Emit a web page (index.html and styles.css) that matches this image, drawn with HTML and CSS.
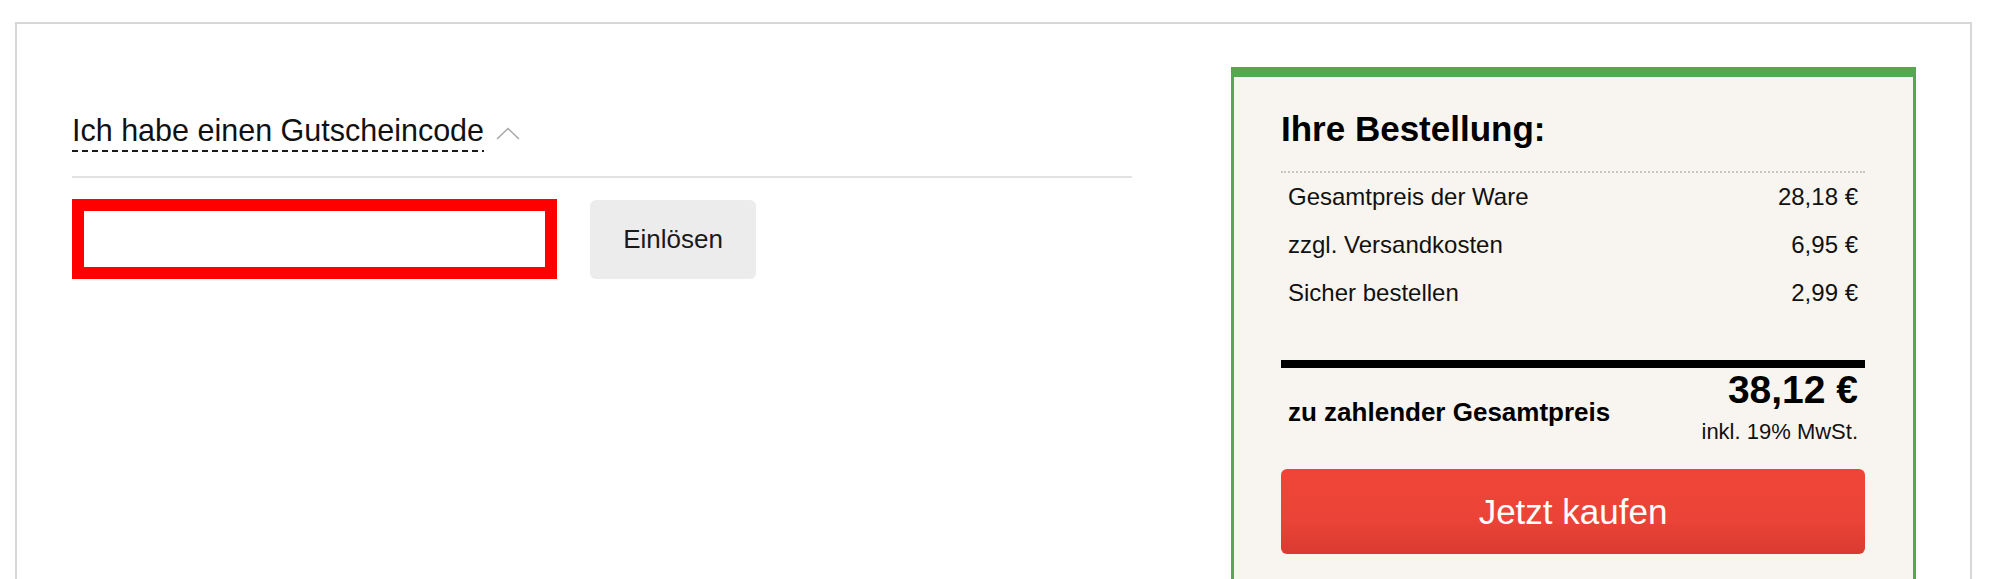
FILE: index.html
```html
<!DOCTYPE html>
<html lang="de">
<head>
<meta charset="utf-8">
<title>Warenkorb</title>
<link rel="stylesheet" href="styles.css">
</head>
<body>
<div class="page">
  <div class="checkout">
    <section class="coupon">
      <div class="coupon-toggle">
        <span class="coupon-label">Ich habe einen Gutscheincode</span>
        <svg class="chevron" width="24" height="13" viewBox="0 0 24 13" aria-hidden="true">
          <polyline points="1,12 12,1.5 23,12" fill="none" stroke="#a9a9a9" stroke-width="1.6"/>
        </svg>
      </div>
      <div class="divider"></div>
      <form class="coupon-form">
        <input class="coupon-input" type="text" aria-label="Gutscheincode">
        <button class="redeem" type="button">Einlösen</button>
      </form>
    </section>

    <aside class="summary">
      <h2 class="summary-title">Ihre Bestellung:</h2>
      <div class="summary-rows">
        <div class="row"><span>Gesamtpreis der Ware</span><span>28,18 €</span></div>
        <div class="row"><span>zzgl. Versandkosten</span><span>6,95 €</span></div>
        <div class="row"><span>Sicher bestellen</span><span>2,99 €</span></div>
      </div>
      <div class="total-bar"></div>
      <div class="total">
        <span class="total-label">zu zahlender Gesamtpreis</span>
        <div class="total-amount">
          <div class="total-price">38,12 €</div>
          <div class="total-vat">inkl. 19% MwSt.</div>
        </div>
      </div>
      <button class="buy" type="button">Jetzt kaufen</button>
    </aside>
  </div>
</div>
</body>
</html>
```

FILE: styles.css
```css
html, body {
  margin: 0;
  padding: 0;
  background: #ffffff;
}

body {
  font-family: "Liberation Sans", Arial, sans-serif;
  color: #111111;
}

.page {
  padding-top: 22px;
  padding-left: 15px;
}

.checkout {
  box-sizing: border-box;
  width: 1957px;
  border: 2px solid #d7d7d7;
  border-bottom: none;
  padding: 43px 54px 0 55px;
  display: grid;
  grid-template-columns: 1060px 685px;
  column-gap: 99px;
  align-items: start;
}

/* ---------- coupon ---------- */

.coupon {
  padding-top: 45px;
}

.coupon-toggle {
  display: flex;
  align-items: flex-start;
}

.coupon-label {
  font-size: 30.5px;
  line-height: 36px;
  color: #111111;
  padding-bottom: 4px;
  background-image: linear-gradient(to right, #1a1a1a 6px, transparent 6px);
  background-size: 10px 2px;
  background-repeat: repeat-x;
  background-position: left bottom;
}

.chevron {
  margin-left: 12px;
  margin-top: 15px;
  flex: none;
}

.divider {
  height: 2px;
  background: #e2e2e2;
  margin-top: 24px;
}

.coupon-form {
  display: flex;
  align-items: flex-start;
  margin: 21px 0 0 0;
}

.coupon-input {
  box-sizing: border-box;
  width: 485px;
  height: 80px;
  border: 12px solid #ff0000;
  background: #ffffff;
  margin: 0;
  padding: 0 10px;
  font: 24px "Liberation Sans", Arial, sans-serif;
  outline: none;
}

.redeem {
  box-sizing: border-box;
  width: 166px;
  height: 79px;
  margin: 1px 0 0 33px;
  border: none;
  border-radius: 6px;
  background: #ececec;
  color: #1a1a1a;
  font: 26px "Liberation Sans", Arial, sans-serif;
  padding: 0;
}

/* ---------- summary ---------- */

.summary {
  box-sizing: border-box;
  background: #f8f5f0;
  border: 3px solid #54a84e;
  border-top-width: 10px;
  padding: 32px 48px 60px 47px;
}

.summary-title {
  margin: 0;
  font-size: 35px;
  line-height: 40px;
  font-weight: bold;
  color: #000000;
}

.summary-rows {
  margin-top: 22px;
  border-top: 2px dotted #c6c6c6;
}

.row {
  display: flex;
  justify-content: space-between;
  padding: 0 7px;
  font-size: 24px;
  line-height: 48px;
  color: #111111;
}

.total-bar {
  height: 8px;
  background: #000000;
  margin-top: 43px;
}

.total {
  display: flex;
  justify-content: space-between;
  align-items: flex-start;
  padding: 0 7px;
}

.total-label {
  font-size: 26px;
  line-height: 30px;
  font-weight: bold;
  color: #000000;
  padding-top: 29px;
}

.total-amount {
  text-align: right;
}

.total-price {
  font-size: 39px;
  line-height: 44px;
  font-weight: bold;
  color: #000000;
}

.total-vat {
  margin-top: 8px;
  font-size: 22px;
  line-height: 24px;
  color: #111111;
}

.buy {
  display: block;
  box-sizing: border-box;
  width: 100%;
  height: 85px;
  margin-top: 25px;
  border: none;
  border-radius: 6px;
  background: linear-gradient(to bottom, #ef4538 0%, #eb4337 60%, #d93b30 100%);
  color: #ffffff;
  font: 35px "Liberation Sans", Arial, sans-serif;
  padding: 0;
}
```
